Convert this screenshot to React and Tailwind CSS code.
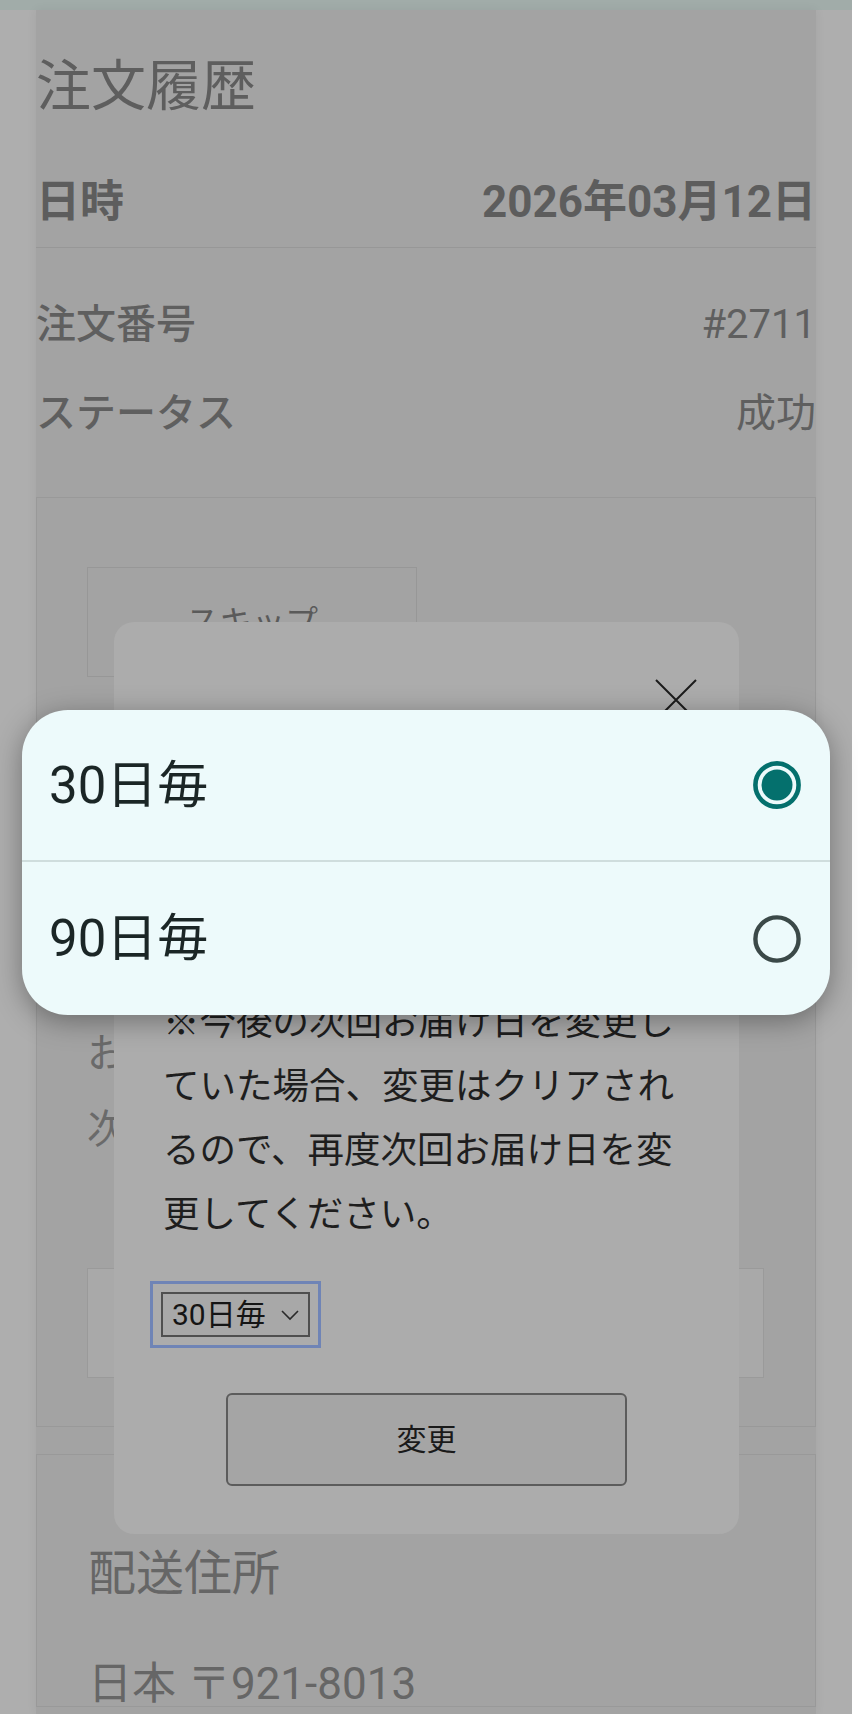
const Radio = ({ checked }) => (
  <svg width="48" height="48" viewBox="0 0 48 48">
    {checked ? (
      <>
        <circle cx="24" cy="24" r="21.6" fill="none" stroke="#04706d" strokeWidth="4.6" />
        <circle cx="24" cy="24" r="15.5" fill="#04706d" />
      </>
    ) : (
      <circle cx="24" cy="24" r="21.6" fill="none" stroke="#3b4948" strokeWidth="4.4" />
    )}
  </svg>
);

const App = () => {
  return (
    <div className="relative flex h-[1714px] w-[858px] overflow-hidden bg-white font-['Roboto','Noto_Sans_CJK_JP',sans-serif]">
      <div className="relative h-full w-[852px] bg-[#aeaeae]">
        <div className="h-[10px] bg-[#a1aca9]" />

        {/* page column */}
        <div className="mx-[36px] h-[1704px] bg-[#a3a3a3] shadow-[0_0_10px_rgba(0,0,0,0.06)]">
          <h1 className="pt-[49px] text-[55px] leading-none text-[#5e5e5e]">注文履歴</h1>

          <div className="mt-[66px] flex items-center justify-between border-b border-[#979797] pb-[23px] text-[44px] font-bold leading-none text-[#5d5d5d]">
            <span>日時</span>
            <span>2026年03月12日</span>
          </div>

          <div className="mt-[57px] flex items-center justify-between text-[40px] leading-none text-[#5f5f5f]">
            <span className="font-medium">注文番号</span>
            <span>#2711</span>
          </div>
          <div className="mt-[49px] flex items-center justify-between text-[40px] leading-none text-[#5f5f5f]">
            <span className="font-medium">ステータス</span>
            <span>成功</span>
          </div>

          <div className="mt-[63px] border border-[#999999] px-[50px] pt-[69px] pb-[48px]">
            <div className="flex h-[110px] w-[330px] items-center justify-center border border-[#979797] text-[33px] leading-none text-[#5a5a5a]">
              スキップ
            </div>
            <p className="mt-[357px] text-[40px] leading-none text-[#6a6a6a]">お届け周期</p>
            <p className="mt-[36px] text-[40px] leading-none text-[#6a6a6a]">次回お届け日</p>
            <div className="mt-[118px] h-[110px] w-[677px] border border-[#9a9a9a] bg-[#a9a9a9]" />
          </div>

          <div className="mt-[27px] border border-[#999999] px-[51px] pt-[95px]">
            <h2 className="text-[48px] leading-none text-[#666666]">配送住所</h2>
            <p className="mt-[64px] text-[44px] leading-none text-[#666666]">日本 〒921-8013</p>
          </div>
        </div>

        {/* modal */}
        <div className="absolute left-[114px] top-[622px] h-[912px] w-[625px] rounded-[20px] bg-[#acacac] px-[49px]">
          <div className="-mr-[8px] flex justify-end pt-[56px]">
            <svg width="44" height="44" viewBox="0 0 44 44">
              <path d="M2 2L42 42M42 2L2 42" stroke="#1c1c1c" strokeWidth="2" fill="none" />
            </svg>
          </div>
          <p className="mt-[269px] text-[36.5px] leading-[64px] text-[#1e1e1e]">
            ※今後の次回お届け日を変更していた場合、変更はクリアされるので、再度次回お届け日を変更してください。
          </p>
          <div className="-ml-[13px] mt-[34px] inline-flex border-[3px] border-[#6f84b6] p-[8px]">
            <div className="flex h-[45px] w-[149px] items-center border-2 border-[#4f4f4f] bg-[#a8a8a8] pl-[9px] text-[30px] leading-none text-[#151515]">
              <span>30日毎</span>
              <svg className="ml-[14px]" width="20" height="12" viewBox="0 0 20 12">
                <path d="M2 2L10 10L18 2" stroke="#2a2a2a" strokeWidth="1.6" fill="none" />
              </svg>
            </div>
          </div>
          <button className="mx-auto mt-[45px] flex h-[93px] w-[401px] items-center justify-center rounded-[6px] border-2 border-[#5c5c5c] bg-[#a5a5a5] text-[30px] leading-none text-[#1a1a1a]">
            変更
          </button>
        </div>

        {/* native select popup */}
        <div className="absolute left-[22px] top-[710px] w-[808px] overflow-hidden rounded-[46px] bg-[#edfafb] shadow-[0_6px_28px_rgba(0,0,0,0.35)]">
          <div className="flex h-[152px] items-center justify-between border-b-[2px] border-[#cfdddd] pl-[27px] pr-[29px] text-[51px] leading-none text-[#1b2626]">
            <span>30日毎</span>
            <Radio checked />
          </div>
          <div className="flex h-[153px] items-center justify-between pl-[27px] pr-[29px] text-[51px] leading-none text-[#1b2626]">
            <span>90日毎</span>
            <Radio />
          </div>
        </div>
      </div>
    </div>
  );
};

export default App;
